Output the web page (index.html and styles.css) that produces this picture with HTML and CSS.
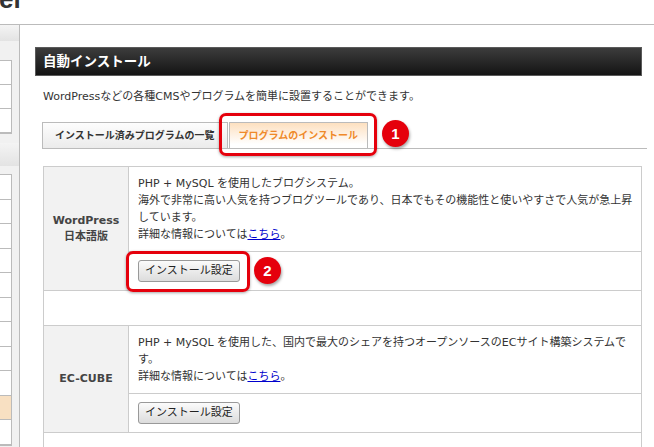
FILE: index.html
```html
<!DOCTYPE html>
<html lang="ja">
<head>
    <meta charset="UTF-8">
    <meta name="viewport" content="width=device-width, initial-scale=1.0">
    <title>自動インストール</title>
    <link rel="stylesheet" href="styles.css">
</head>
<body>
    <div class="topbar"><span class="logo">el</span></div>

    <div class="layout">
        <aside class="sidebar">
            <div class="side-head"></div>
            <ul class="side-list">
                <li></li><li></li><li></li>
            </ul>
            <div class="side-head second"></div>
            <ul class="side-list long">
                <li></li><li></li><li></li><li></li><li></li>
                <li></li><li></li><li></li><li></li>
                <li class="current"></li><li></li>
            </ul>
        </aside>

        <main class="main">
            <h2 class="title-bar">自動インストール</h2>
            <p class="lead">WordPressなどの各種CMSやプログラムを簡単に設置することができます。</p>

            <ul class="tabs">
                <li class="tab">インストール済みプログラムの一覧</li>
                <li class="tab active">プログラムのインストール</li>
            </ul>

            <table class="programs">
                <tr>
                    <th class="name" rowspan="2">WordPress<br>日本語版</th>
                    <td class="desc">
                        PHP + MySQL を使用したブログシステム。<br>
                        海外で非常に高い人気を持つブログツールであり、日本でもその機能性と使いやすさで人気が急上昇しています。<br>
                        詳細な情報については<a href="#">こちら</a>。
                    </td>
                </tr>
                <tr>
                    <td class="action"><button class="btn">インストール設定</button></td>
                </tr>
                <tr class="spacer"><td colspan="2"></td></tr>
                <tr>
                    <th class="name" rowspan="2">EC-CUBE</th>
                    <td class="desc">
                        PHP + MySQL を使用した、国内で最大のシェアを持つオープンソースのECサイト構築システムです。<br>
                        詳細な情報については<a href="#">こちら</a>。
                    </td>
                </tr>
                <tr>
                    <td class="action"><button class="btn">インストール設定</button></td>
                </tr>
                <tr class="spacer"><td colspan="2"></td></tr>
            </table>
        </main>
    </div>

    <!-- 注釈 -->
    <div class="mark mark-tab"></div>
    <span class="badge badge-1">1</span>
    <div class="mark mark-btn"></div>
    <span class="badge badge-2">2</span>
</body>
</html>
```

FILE: styles.css
```css
body {
    margin: 0;
    width: 654px;
    height: 447px;
    overflow: hidden;
    position: relative;
    font-family: "DejaVu Sans", "Noto Sans CJK JP", sans-serif;
    color: #333;
    background-color: #fff;
}
.topbar {
    height: 24px;
    border-bottom: 1px solid #bbb;
    overflow: hidden;
}
.logo {
    display: block;
    margin: -14px 0 0 -1px;
    font: bold 26px/26px "Liberation Sans", sans-serif;
    color: #333;
}
.layout {
    display: flex;
}

/* サイドバー */
.sidebar {
    width: 19px;
    min-height: 422px;
    border-right: 1px solid #bbb;
    background-color: #f1f1f1;
}
.side-head {
    height: 16px;
    background: linear-gradient(#f4f4f4, #e3e3e3);
}
.side-head.second {
    height: 23px;
    margin-top: 9px;
}
.side-list {
    list-style: none;
    margin: 19px 0 0;
    padding: 0;
    width: 11px;
    border: 1px solid #bbb;
    border-left: 0;
    background-color: #fff;
}
.side-list.long {
    margin-top: 8px;
}
.side-list li {
    height: 23px;
    border-bottom: 1px solid #bbb;
}
.side-list.long li {
    height: 23.5px;
}
.side-list li.current {
    background-color: #f8e0c2;
}

/* メイン */
.main {
    flex: 1;
    padding: 22px 12px 0 15px;
}
.title-bar {
    margin: 0;
    height: 27px;
    padding-left: 7px;
    border: 1px solid #5a5a5a;
    background: linear-gradient(#3c3c3c, #141414);
    color: #fff;
    font-size: 13.5px;
    font-weight: bold;
    line-height: 27px;
}
.lead {
    margin: 12px 0 0 8px;
    font-size: 11px;
    line-height: 17px;
}
.tabs {
    display: flex;
    gap: 1px;
    list-style: none;
    margin: 17px -5px 0 7px;
    padding: 0;
    border-bottom: 1px solid #bbb;
}
.tab {
    padding: 0 12px;
    border: 1px solid #bbb;
    border-bottom: 0;
    background: linear-gradient(#fdfdfd, #ebebeb);
    font-size: 10px;
    font-weight: bold;
    line-height: 25px;
    color: #333;
}
.tab.active {
    padding: 0 9px;
    background: linear-gradient(#fde0c0, #fff 85%);
    color: #ef8a2a;
}
.programs {
    width: 599px;
    margin: 17px 0 0 8px;
    border-collapse: collapse;
    font-size: 11px;
}
.programs th, .programs td {
    border: 1px solid #ccc;
}
.programs .name {
    width: 84px;
    padding: 0;
    background-color: #f2f2f2;
    color: #444;
    font-weight: bold;
    line-height: 16px;
    text-align: center;
    vertical-align: middle;
}
.programs .desc {
    padding: 8px 4px 8px 9px;
    line-height: 17px;
}
.programs .desc a {
    color: #0000cc;
}
.programs .action {
    padding: 8px 9px;
    line-height: 0;
}
.programs .spacer td {
    height: 34px;
    padding: 0;
}
.btn {
    height: 22px;
    padding: 0 6px;
    border: 1px solid #999;
    border-radius: 3px;
    background: linear-gradient(#fbfbfb, #dcdcdc);
    font-family: "DejaVu Sans", "Noto Sans CJK JP", sans-serif;
    font-size: 11px;
    line-height: 20px;
    color: #222;
}

/* 注釈 */
.mark {
    position: absolute;
    box-sizing: border-box;
    border: 3px solid #e5000c;
    border-radius: 7px;
    box-shadow: 0 1px 3px rgba(0,0,0,0.35);
}
.mark-tab {
    left: 219px;
    top: 113px;
    width: 158px;
    height: 43px;
}
.mark-btn {
    left: 126px;
    top: 251px;
    width: 124px;
    height: 41px;
}
.badge {
    position: absolute;
    width: 27px;
    height: 27px;
    border-radius: 50%;
    background-color: #e5000c;
    box-shadow: 1px 2px 3px rgba(0,0,0,0.35);
    color: #fff;
    font: bold 15px/27px "Liberation Sans", sans-serif;
    text-align: center;
}
.badge-1 {
    left: 382px;
    top: 120px;
}
.badge-2 {
    left: 254px;
    top: 257px;
}
```
